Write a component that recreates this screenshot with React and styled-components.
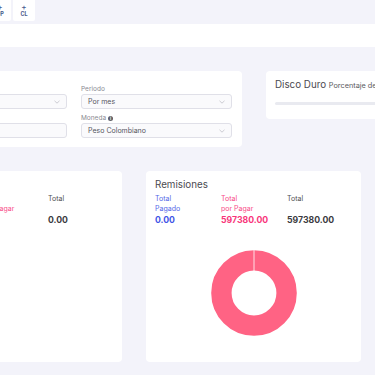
import React from 'react';
import styled, { createGlobalStyle } from 'styled-components';

const GlobalStyle = createGlobalStyle`
  html, body {
    margin: 0;
    padding: 0;
    background: #f3f3fa;
    overflow: hidden;
  }
  body {
    font-family: 'Inter', 'Roboto', sans-serif;
    color: #444;
  }
`;

const Toolbar = styled.div`
  display: flex;
  gap: 2px;
  height: 24px;
  margin-left: -11px;
`;

const ToolButton = styled.div`
  width: 22px;
  height: 21px;
  background: #fff;
  border-radius: 0 0 2px 2px;
  display: flex;
  flex-direction: column;
  align-items: center;
  justify-content: center;
  color: #4a5b8c;
  font-size: 5.5px;
  font-weight: 700;
  line-height: 7px;
`;

const Plus = styled.span`
  font-size: 8px;
  font-weight: 500;
  line-height: 7px;
`;

const HeaderStrip = styled.div`
  height: 23px;
  background: #fff;
`;

const Content = styled.div`
  margin-left: -93px;
  padding-top: 24px;
  display: flex;
  flex-direction: column;
  gap: 24px;
`;

const Row = styled.div`
  display: flex;
  align-items: flex-start;
  gap: 24px;
`;

const Card = styled.div`
  background: #fff;
  border-radius: 4px;
  box-sizing: border-box;
  width: ${p => p.$w}px;
  flex: none;
`;

const FilterCard = styled(Card)`
  padding: 14px 9px 9px;
  display: grid;
  grid-template-columns: 151px 151px;
  column-gap: 14px;
  row-gap: 5px;
`;

const Field = styled.div`
  display: flex;
  flex-direction: column;
  gap: 1px;
`;

const Label = styled.div`
  font-size: 6.5px;
  line-height: 8px;
  color: #8a8a92;
  display: flex;
  align-items: center;
  gap: 2px;
`;

const Info = styled.span`
  width: 5px;
  height: 5px;
  border-radius: 50%;
  background: #5c5c64;
  color: #fff;
  font-size: 4px;
  font-weight: 700;
  line-height: 5px;
  text-align: center;
`;

const Select = styled.div`
  height: 15px;
  box-sizing: border-box;
  border: 1px solid #e0e0e8;
  border-radius: 3px;
  background: #fafafc;
  padding: 0 6px;
  display: flex;
  align-items: center;
  justify-content: space-between;
  font-size: 7px;
  color: #55555c;
`;

const Chevron = () => (
  <svg width="6" height="4" viewBox="0 0 6 4">
    <path d="M0.5 0.8 L3 3.2 L5.5 0.8" fill="none" stroke="#b8b8c0" strokeWidth="0.7" />
  </svg>
);

const DiskCard = styled(Card)`
  padding: 9px 9px 14px;
`;

const Title = styled.div`
  font-size: 9.8px;
  line-height: 10px;
  color: #4a4a50;
  white-space: nowrap;
`;

const Sub = styled.span`
  font-size: 7.3px;
  color: #5a5a60;
`;

const Track = styled.div`
  margin-top: 11px;
  height: 3px;
  border-radius: 2px;
  background: #e9eaf0;
`;

const StatCard = styled(Card)`
  height: 191px;
  padding: 9px;
  display: flex;
  flex-direction: column;
`;

const Stats = styled.div`
  margin-top: 4px;
  display: grid;
  grid-template-columns: repeat(3, 66px);
`;

const Stat = styled.div`
  color: ${p => p.$c};
`;

const StatLabel = styled.div`
  font-size: 7px;
  line-height: 10px;
  height: 20px;
  opacity: 0.9;
`;

const StatValue = styled.div`
  font-size: 8.7px;
  line-height: 11px;
  font-weight: 700;
  margin-top: 0.5px;
`;

const ChartWrap = styled.div`
  margin-top: 24px;
  display: flex;
  justify-content: center;
`;

const BLUE = '#4255e6';
const PINK = '#f8357a';
const DARK = '#3a3a40';

function Stats3({ pagado, porPagar, total }) {
  return (
    <Stats>
      <Stat $c={BLUE}>
        <StatLabel>Total<br />Pagado</StatLabel>
        <StatValue>{pagado}</StatValue>
      </Stat>
      <Stat $c={PINK}>
        <StatLabel>Total<br />por Pagar</StatLabel>
        <StatValue>{porPagar}</StatValue>
      </Stat>
      <Stat $c={DARK}>
        <StatLabel>Total</StatLabel>
        <StatValue>{total}</StatValue>
      </Stat>
    </Stats>
  );
}

const Donut = () => (
  <svg width="86" height="86" viewBox="0 0 86 86">
    <circle cx="43" cy="43" r="32.6" fill="none" stroke="#ff6384" strokeWidth="20.4" />
    <line x1="43" y1="0" x2="43" y2="21" stroke="#fff" strokeWidth="0.8" />
  </svg>
);

export default function App() {
  return (
    <>
      <GlobalStyle />
      <Toolbar>
        <ToolButton><Plus>+</Plus>OP</ToolButton>
        <ToolButton><Plus>+</Plus>CL</ToolButton>
      </Toolbar>
      <HeaderStrip />
      <Content>
        <Row>
          <FilterCard $w={335}>
            <Field>
              <Label>Sucursal</Label>
              <Select>Todas<Chevron /></Select>
            </Field>
            <Field>
              <Label>Periodo</Label>
              <Select>Por mes<Chevron /></Select>
            </Field>
            <Field>
              <Label>Fecha</Label>
              <Select>&nbsp;</Select>
            </Field>
            <Field>
              <Label>Moneda <Info>i</Info></Label>
              <Select>Peso Colombiano<Chevron /></Select>
            </Field>
          </FilterCard>
          <DiskCard $w={335}>
            <Title>Disco Duro <Sub>Porcentaje de uso</Sub></Title>
            <Track />
          </DiskCard>
        </Row>
        <Row>
          <StatCard $w={215}>
            <Title>Facturas</Title>
            <Stats3 pagado="0.00" porPagar="0" total="0.00" />
          </StatCard>
          <StatCard $w={215}>
            <Title>Remisiones</Title>
            <Stats3 pagado="0.00" porPagar="597380.00" total="597380.00" />
            <ChartWrap><Donut /></ChartWrap>
          </StatCard>
        </Row>
      </Content>
    </>
  );
}
